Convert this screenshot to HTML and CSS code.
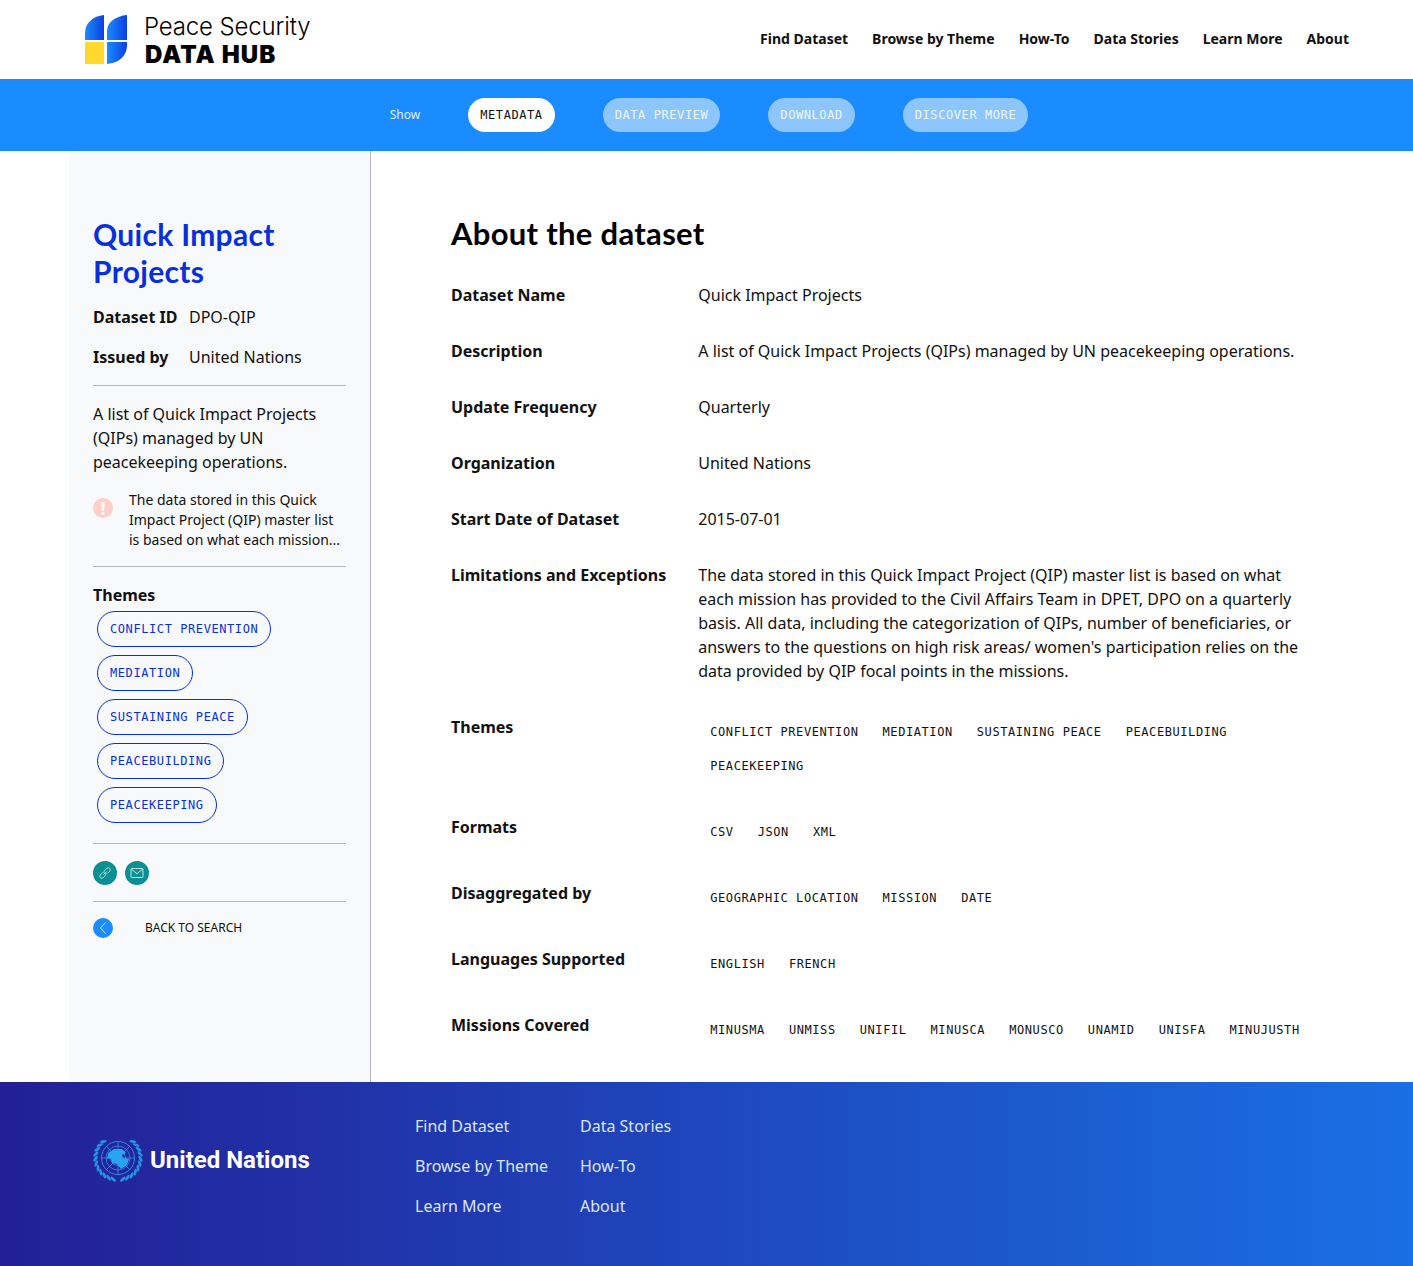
FILE: index.html
```html
<!DOCTYPE html>
<html lang="en">
<head>
  <meta charset="UTF-8">
  <meta name="viewport" content="width=device-width, initial-scale=1.0">
  <title>Quick Impact Projects - Peace Security Data Hub</title>
  <link rel="stylesheet" href="styles.css">
</head>
<body>
  <header class="top-bar">
    <a class="brand" href="#">
      <svg class="brand-mark" width="43" height="50" viewBox="0 0 43 50">
        <defs>
          <linearGradient id="blueFill" x1="0" y1="0" x2="1" y2="0">
            <stop offset="0" stop-color="#1a8cff"/>
            <stop offset="1" stop-color="#0b3fe0"/>
          </linearGradient>
        </defs>
        <path d="M0 25V18C0 8 8 1 19 0V25Z" fill="url(#blueFill)"/>
        <path d="M22 25V16C22 7 31 1 42 0V25Z" fill="url(#blueFill)"/>
        <rect x="0" y="27" width="19" height="22" fill="#ffd92e"/>
        <path d="M22 27H42V30C42 41 34 48 22 49Z" fill="url(#blueFill)"/>
      </svg>
      <span class="brand-text">
        <span class="brand-top">Peace Security</span>
        <span class="brand-bottom">DATA HUB</span>
      </span>
    </a>
    <nav class="main-nav">
      <a href="#">Find Dataset</a>
      <a href="#">Browse by Theme</a>
      <a href="#">How-To</a>
      <a href="#">Data Stories</a>
      <a href="#">Learn More</a>
      <a href="#">About</a>
    </nav>
  </header>

  <div class="show-bar">
    <span class="show-label">Show</span>
    <a class="show-pill active" href="#">METADATA</a>
    <a class="show-pill" href="#">DATA PREVIEW</a>
    <a class="show-pill" href="#">DOWNLOAD</a>
    <a class="show-pill" href="#">DISCOVER MORE</a>
  </div>

  <div class="page">
    <aside class="sidebar">
      <h2 class="side-title">Quick Impact Projects</h2>
      <div class="side-meta"><b>Dataset ID</b><span>DPO-QIP</span></div>
      <div class="side-meta"><b>Issued by</b><span>United Nations</span></div>
      <hr>
      <p class="side-desc">A list of Quick Impact Projects (QIPs) managed by UN peacekeeping operations.</p>
      <div class="side-warn">
        <span class="warn-icon">!</span>
        <p>The data stored in this Quick Impact Project (QIP) master list is based on what each mission...</p>
      </div>
      <hr>
      <h3 class="side-themes">Themes</h3>
      <div class="theme-list">
        <a class="theme-pill" href="#">CONFLICT PREVENTION</a>
        <a class="theme-pill" href="#">MEDIATION</a>
        <a class="theme-pill" href="#">SUSTAINING PEACE</a>
        <a class="theme-pill" href="#">PEACEBUILDING</a>
        <a class="theme-pill" href="#">PEACEKEEPING</a>
      </div>
      <hr>
      <div class="share-row">
        <a class="share-btn" href="#">
          <svg width="18" height="18" viewBox="0 0 14 14" fill="none" stroke="#bfe6e4" stroke-width="0.700">
            <path d="M6 8.200 8.200 6M5.200 6.600 3.400 8.400a1.600 1.600 0 0 0 0 2.200 1.600 1.600 0 0 0 2.200 0l1.800-1.800a1.600 1.600 0 0 0 0-2.200M8.800 7.400l1.800-1.800a1.600 1.600 0 0 0 0-2.200 1.600 1.600 0 0 0-2.200 0L6.600 5.200a1.600 1.600 0 0 0 0 2.200"/>
          </svg>
        </a>
        <a class="share-btn" href="#">
          <svg width="14" height="14" viewBox="0 0 14 14" fill="none" stroke="#bfe6e4" stroke-width="1">
            <rect x="1" y="2.500" width="12" height="9" rx="0.800"/>
            <path d="M1.300 3 7 7.800 12.700 3"/>
          </svg>
        </a>
      </div>
      <hr>
      <a class="back-link" href="#">
        <span class="back-icon">
          <svg width="10" height="14" viewBox="0 0 10 14" fill="none" stroke="#d6ebff" stroke-width="1">
            <path d="M7.500 1.500 2.500 7l5 5.500"/>
          </svg>
        </span>
        BACK TO SEARCH
      </a>
    </aside>

    <main class="content">
      <h1>About the dataset</h1>
      <dl class="info">
        <dt>Dataset Name</dt>
        <dd>Quick Impact Projects</dd>
        <dt>Description</dt>
        <dd>A list of Quick Impact Projects (QIPs) managed by UN peacekeeping operations.</dd>
        <dt>Update Frequency</dt>
        <dd>Quarterly</dd>
        <dt>Organization</dt>
        <dd>United Nations</dd>
        <dt>Start Date of Dataset</dt>
        <dd>2015-07-01</dd>
        <dt>Limitations and Exceptions</dt>
        <dd>The data stored in this Quick Impact Project (QIP) master list is based on what each mission has provided to the Civil Affairs Team in DPET, DPO on a quarterly basis. All data, including the categorization of QIPs, number of beneficiaries, or answers to the questions on high risk areas/ women's participation relies on the data provided by QIP focal points in the missions.</dd>
        <dt>Themes</dt>
        <dd class="tags"><span>CONFLICT PREVENTION</span><span>MEDIATION</span><span>SUSTAINING PEACE</span><span>PEACEBUILDING</span><span>PEACEKEEPING</span></dd>
        <dt>Formats</dt>
        <dd class="tags"><span>CSV</span><span>JSON</span><span>XML</span></dd>
        <dt>Disaggregated by</dt>
        <dd class="tags"><span>GEOGRAPHIC LOCATION</span><span>MISSION</span><span>DATE</span></dd>
        <dt>Languages Supported</dt>
        <dd class="tags"><span>ENGLISH</span><span>FRENCH</span></dd>
        <dt>Missions Covered</dt>
        <dd class="tags"><span>MINUSMA</span><span>UNMISS</span><span>UNIFIL</span><span>MINUSCA</span><span>MONUSCO</span><span>UNAMID</span><span>UNISFA</span><span>MINUJUSTH</span></dd>
      </dl>
    </main>
  </div>

  <footer class="site-footer">
    <div class="un-logo">
      <svg width="52" height="44" viewBox="0 0 52 44" fill="none" stroke="#2aa3f0">
        <defs>
          <ellipse id="leaf" cx="26" cy="-1.500" rx="1.400" ry="3.400" fill="#2196e6" stroke="none" transform="rotate(58 26 -1.500)"/>
        </defs>
        <circle cx="25" cy="20" r="16.500" stroke-width="0.800"/>
        <circle cx="25" cy="20" r="12" stroke-width="0.700"/>
        <circle cx="25" cy="20" r="7.500" stroke-width="0.700"/>
        <path d="M25 3.500V36.500M8.500 20H41.500M13.300 8.300 36.700 31.700M36.700 8.300 13.300 31.700" stroke-width="0.700"/>
        <path d="M15 15l6-4 8 0 4 4-4 2 1 3 6 1-2 6-6 4-4-5-5-1-1-4-4-1 1-3Z" fill="#2aa3f0" stroke="none"/>
        <g id="wreath">
          <use href="#leaf" transform="rotate(40 26 20)"/>
          <use href="#leaf" transform="rotate(53 26 20)"/>
          <use href="#leaf" transform="rotate(66 26 20)"/>
          <use href="#leaf" transform="rotate(79 26 20)"/>
          <use href="#leaf" transform="rotate(92 26 20)"/>
          <use href="#leaf" transform="rotate(105 26 20)"/>
          <use href="#leaf" transform="rotate(118 26 20)"/>
          <use href="#leaf" transform="rotate(131 26 20)"/>
          <use href="#leaf" transform="rotate(144 26 20)"/>
          <use href="#leaf" transform="rotate(157 26 20)"/>
          <use href="#leaf" transform="rotate(170 26 20)"/>
        </g>
        <use href="#wreath" transform="matrix(-1 0 0 1 50 0)"/>
      </svg>
      <span>United Nations</span>
    </div>
    <div class="footer-links">
      <a href="#">Find Dataset</a>
      <a href="#">Data Stories</a>
      <a href="#">Browse by Theme</a>
      <a href="#">How-To</a>
      <a href="#">Learn More</a>
      <a href="#">About</a>
    </div>
  </footer>
</body>
</html>
```

FILE: styles.css
```css
* {
  box-sizing: border-box;
}

body {
  margin: 0;
  font-family: "Noto Sans", sans-serif;
  font-size: 16px;
  line-height: 24px;
  color: #111;
  background: #fff;
}

a {
  color: inherit;
  text-decoration: none;
}

/* top bar */
.top-bar {
  height: 79px;
  display: flex;
  align-items: center;
  justify-content: space-between;
  padding: 0 64px 0 85px;
}

.brand {
  display: flex;
  align-items: center;
  gap: 16px;
}

.brand-mark {
  display: block;
}

.brand-text {
  display: flex;
  flex-direction: column;
  padding-top: 2px;
  color: #000;
}

.brand-top {
  font-family: Inter, sans-serif;
  font-weight: 300;
  font-size: 24px;
  line-height: 25px;
  letter-spacing: -0.15px;
  padding-bottom: 2px;
}

.brand-bottom {
  padding-left: 1px;
  font-family: Inter, sans-serif;
  font-weight: 900;
  font-size: 24px;
  line-height: 27px;
  letter-spacing: 1.1px;
}

.main-nav {
  display: flex;
  gap: 24px;
  margin-bottom: 2px;
  font-size: 14px;
  font-weight: 700;
}

/* show bar */
.show-bar {
  height: 72px;
  background: #1a8cff;
  display: flex;
  align-items: center;
  justify-content: center;
  gap: 48px;
  padding-left: 5px;
}

.show-label {
  font-size: 12px;
  color: #e4f1ff;
}

.show-pill {
  height: 34px;
  padding: 0 12px;
  border-radius: 17px;
  background: rgba(255, 255, 255, 0.5);
  color: #eef6ff;
  font-family: "DejaVu Sans Mono", monospace;
  font-size: 12px;
  letter-spacing: 0.58px;
  line-height: 34px;
}

.show-pill.active {
  background: #fff;
  color: #111;
}

/* page */
.page {
  display: flex;
  height: 931px;
}

.sidebar {
  width: 302px;
  margin-left: 69px;
  padding: 65px 24px 0;
  background: #f8f9fb;
  border-right: 1px solid #b5b7bf;
}

.sidebar hr {
  border: 0;
  border-top: 1px solid #b5b7bf;
  margin: 0;
}

.side-title {
  margin: 0 0 15px;
  font-family: Lato, sans-serif;
  font-size: 30px;
  line-height: 37px;
  font-weight: 700;
  letter-spacing: 0.3px;
  color: #0730dc;
}

.side-meta {
  display: flex;
  gap: 12px;
  margin-bottom: 16px;
  white-space: nowrap;
}

.side-meta b {
  width: 84px;
}

.side-desc {
  margin: 16px 0;
}

.side-warn {
  display: flex;
  margin-bottom: 16px;
  font-size: 14px;
  line-height: 20px;
}

.side-warn p {
  margin: 0;
  flex: 1;
}

.warn-icon {
  flex: none;
  width: 20px;
  height: 20px;
  margin: 8px 16px 0 0;
  border-radius: 50%;
  background: #ffcfc7;
  color: #fff;
  font-size: 18px;
  font-weight: 700;
  text-align: center;
  line-height: 20px;
}

.side-themes {
  margin: 16px 0 4px;
  font-size: 16px;
  line-height: 24px;
  font-weight: 700;
}

.theme-list {
  display: flex;
  flex-direction: column;
  align-items: flex-start;
  gap: 8px;
  padding: 0 4px 20px;
}

.theme-pill {
  height: 36px;
  padding: 0 12px;
  border: 1px solid #0730dc;
  border-radius: 18px;
  color: #0730dc;
  font-family: "DejaVu Sans Mono", monospace;
  font-size: 12px;
  letter-spacing: 0.58px;
  line-height: 34px;
}

.share-row {
  display: flex;
  gap: 8px;
  padding: 17px 0 16px;
}

.share-btn {
  width: 24px;
  height: 24px;
  border-radius: 50%;
  background: #0b8f92;
  display: flex;
  align-items: center;
  justify-content: center;
}

.back-link {
  display: flex;
  align-items: center;
  margin-top: 16px;
  font-size: 12px;
  line-height: 20px;
}

.back-icon {
  width: 20px;
  height: 20px;
  margin-right: 32px;
  border-radius: 50%;
  background: #1a8cff;
  display: flex;
  align-items: center;
  justify-content: center;
}

/* main column */
.content {
  flex: 1;
  padding: 64px 96px 0 80px;
}

.content h1 {
  margin: 0 0 31px;
  font-family: Lato, sans-serif;
  font-size: 31px;
  line-height: 37px;
  font-weight: 700;
  letter-spacing: 0.3px;
  color: #000;
}

.info {
  display: grid;
  grid-template-columns: 247.25px 1fr;
  row-gap: 32px;
  margin: 0;
}

.info dt {
  font-weight: 700;
}

.info dd {
  margin: 0;
}

.tags {
  display: flex;
  flex-wrap: wrap;
}

.tags span {
  height: 34px;
  padding: 0 12px;
  font-family: "DejaVu Sans Mono", monospace;
  font-size: 12px;
  letter-spacing: 0.58px;
  line-height: 34px;
  white-space: nowrap;
}

/* footer */
.site-footer {
  height: 184px;
  background: linear-gradient(90deg, #231f96, #1a6fe4);
  display: flex;
  padding: 32px 0 0 93px;
  color: #fff;
}

.un-logo {
  width: 322px;
  height: 44px;
  margin-top: 24px;
  display: flex;
  align-items: center;
  gap: 5px;
  font-family: Roboto, sans-serif;
  font-weight: 700;
  font-size: 24px;
}

.footer-links {
  display: grid;
  grid-template-columns: 165px auto;
  grid-auto-rows: 40px;
  color: #dbe7ff;
}
```
